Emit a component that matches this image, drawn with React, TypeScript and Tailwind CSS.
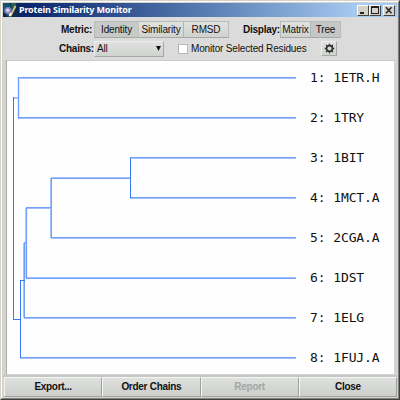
import React from "react";

const chains = ["1ETR.H", "1TRY", "1BIT", "1MCT.A", "2CGA.A", "1DST", "1ELG", "1FUJ.A"];

const raised = "border border-t-[#ecedec] border-l-[#ecedec] border-r-[#a6a8a6] border-b-[#a6a8a6]";
const group = "border border-[#b9bbb9] border-b-[#a6a8a6]";
const face = "bg-linear-to-b from-[#e0e2e0] to-[#cfd2cf]";
const label = "whitespace-nowrap font-bold tracking-[-0.25px]";

function AppIcon() {
  return (
    <svg width="14" height="14" viewBox="0 0 14 14" className="shrink-0">
      <rect width="14" height="14" fill="#132b45" />
      <path d="M0 0h6l4 5-2 9H0z" fill="#17506a" />
      <path d="M0 9l5 5H0z" fill="#10243e" />
      <path d="M8 0h5v5l-3 3z" fill="#245f58" />
      <circle cx="5" cy="7.5" r="3.6" fill="#8583bd" />
      <circle cx="4.8" cy="7.3" r="1.7" fill="#ddd0f2" />
      <path d="M6 11l2 1 4.5-9" fill="none" stroke="#dcc18d" strokeWidth="1.8" />
      <path d="M6.5 13l1.5-3" stroke="#fff6d9" strokeWidth="1.8" />
    </svg>
  );
}

function WindowButton({ kind }: { kind: "min" | "max" | "close" }) {
  return (
    <button className="h-[11px] w-[12px] shrink-0 border border-t-white border-l-white border-r-[#444] border-b-[#444] bg-[#d5d2ca]">
      <svg width="10" height="9" viewBox="0 0 10 9" fill="none" stroke="#222" className="block" shapeRendering={kind === "close" ? "auto" : "crispEdges"}>
        {kind === "min" && <path d="M2 7h4" strokeWidth="2" />}
        {kind === "max" && <path d="M1.5 1v6.5h7V1" strokeWidth="1" />}
        {kind === "max" && <path d="M1 1h8" strokeWidth="2" />}
        {kind === "close" && <path d="M2 1.2l5.5 6M7.5 1.2l-5.5 6" strokeWidth="1.5" />}
      </svg>
    </button>
  );
}

function Tree() {
  return (
    <svg width="290" height="313" viewBox="7 61 290 313" className="shrink-0" fill="none">
      <g stroke="#a3c0ff" strokeWidth="2">
        <path d="M18 78h278M18 118h278M51 178h79M130 158h166M130 198h166M26 208h25M51 238h245M26 278h270M24 318h272M13 98h5M20 358h276" />
        <path d="M18.5 77v41" stroke="#c4d6ff" />
        <path d="M51 178v60M26.2 208v70M24 243v75" />
      </g>
      <g stroke="#70a0fc" strokeWidth="1" shapeRendering="crispEdges">
        <path d="M18 77.5h278M18 117.5h278M51 178.5h79M130 157.5h166M130 197.5h166M26 207.5h25M51 237.5h245M26 278.5h270M24 317.5h272M20 357.5h276M24 242.5h3" />
        <path d="M18.5 77v42M51.5 178v60M26.5 207v72M24.5 243v75" />
      </g>
      <g stroke="#3879f5" strokeWidth="1" shapeRendering="crispEdges">
        <path d="M13.5 97v223M13 319.5h8M20.5 280v78M20 280.5h5M130.5 158v40" />
      </g>
    </svg>
  );
}

function Gear() {
  return (
    <svg width="11" height="11" viewBox="0 0 12 12" fill="none" stroke="#303230">
      <circle cx="6" cy="6" r="3.2" strokeWidth="1.8" />
      <path d="M6 .8v2M6 9.2v2M.8 6h2M9.2 6h2M2.3 2.3l1.2 1.2M8.5 8.5l1.2 1.2M9.7 2.3L8.5 3.5M3.5 8.5L2.3 9.7" strokeWidth="1.5" />
    </svg>
  );
}

export default function App() {
  return (
    <div className="flex h-[400px] w-[400px] flex-col overflow-hidden border border-t-[#d5d2ca] border-l-[#d5d2ca] border-r-[#404040] border-b-[#404040] bg-[#d5d2ca] font-['Liberation_Sans',sans-serif] text-[10px] leading-none tracking-[-0.16px] text-[#111]">
      <div className="flex min-h-0 flex-1 flex-col border border-t-white border-l-white border-r-[#808080] border-b-[#808080] p-px">
        <header className="flex h-[14px] shrink-0 items-center bg-linear-to-r from-[#0a246a] from-5% to-[#a6caf0] to-90% pr-[2px]">
          <AppIcon />
          <h1 className="ml-[2px] flex-1 whitespace-nowrap font-['Noto_Sans','Open_Sans',sans-serif] text-[9px] font-bold leading-[14px] tracking-[-0.16px] text-white">
            Protein Similarity Monitor
          </h1>
          <WindowButton kind="min" />
          <WindowButton kind="max" />
          <span className="w-[2px]" />
          <WindowButton kind="close" />
        </header>
        <div className="flex h-[43px] shrink-0 flex-col bg-[#dadbda] pt-[4px]">
          <div className="flex h-[17px] items-center pl-[58px]">
            <span className={`w-[31px] ${label}`}>Metric:</span>
            <div className={`ml-[2px] flex h-[17px] w-[135px] ${group}`}>
              <button className="w-[44px] border-r border-[#c2c4c2] bg-[#c7cac7]">Identity</button>
              <button className={`w-[45px] border-r border-[#b4b6b4] ${face}`}>Similarity</button>
              <button className={`w-[44px] ${face}`}>RMSD</button>
            </div>
            <span className={`ml-[14px] w-[35px] ${label}`}>Display:</span>
            <div className={`ml-[2px] flex h-[17px] w-[61px] ${group}`}>
              <button className={`w-[30px] border-r border-[#b4b6b4] ${face}`}>Matrix</button>
              <button className="w-[29px] bg-[#c4c7c4]">Tree</button>
            </div>
          </div>
          <div className="mt-[2px] flex h-[17px] items-center pl-[56px]">
            <span className={`w-[33px] ${label}`}>Chains:</span>
            <button className={`ml-[2px] flex h-[16px] w-[70px] items-center justify-between pr-[2px] pl-[2px] ${raised} ${face}`}>
              <span>All</span>
              <svg width="5" height="5" viewBox="0 0 6 6"><path d="M0 0h6L3 6z" fill="#111" /></svg>
            </button>
            <span className="ml-[14px] h-[10px] w-[10px] border border-[#b5b7b5] bg-white" />
            <span className="ml-[3px] w-[115px] whitespace-nowrap">Monitor Selected Residues</span>
            <button className={`ml-[15px] flex h-[15px] w-[16px] items-center justify-center ${raised} ${face}`}><Gear /></button>
          </div>
        </div>
        <div className="h-[315px] shrink-0 border-r-3 border-l-3 border-[#d2d3d2]">
          <main className="flex h-[315px] border-t border-b border-l border-t-[#c9cac9] border-b-[#d2d3d2] border-l-[#a9aba9] bg-[#fefefe]">
            <Tree />
            <ol className="ml-[13px] mt-[-3px] whitespace-pre font-['DejaVu_Sans_Mono',monospace] text-[13px] leading-[40px] tracking-[-0.1px]">
              {chains.map((name, i) => <li key={name}>{`${i + 1}: ${name}`}</li>)}
            </ol>
          </main>
        </div>
        <footer className="grid min-h-0 flex-1 grid-cols-4 border-t-2 border-[#c5c7c5] pl-px">
          {["Export...", "Order Chains", "Report", "Close"].map((name) => (
            <button key={name} disabled={name === "Report"} className={`border border-t-[#f4f5f4] border-l-[#f4f5f4] border-r-[#9fa19f] border-b-[#9fa19f] bg-linear-to-b from-[#dfe1df] to-[#cbcecb] font-bold tracking-[-0.28px] disabled:text-[#a4a6a4]`}>
              {name}
            </button>
          ))}
        </footer>
      </div>
    </div>
  );
}
